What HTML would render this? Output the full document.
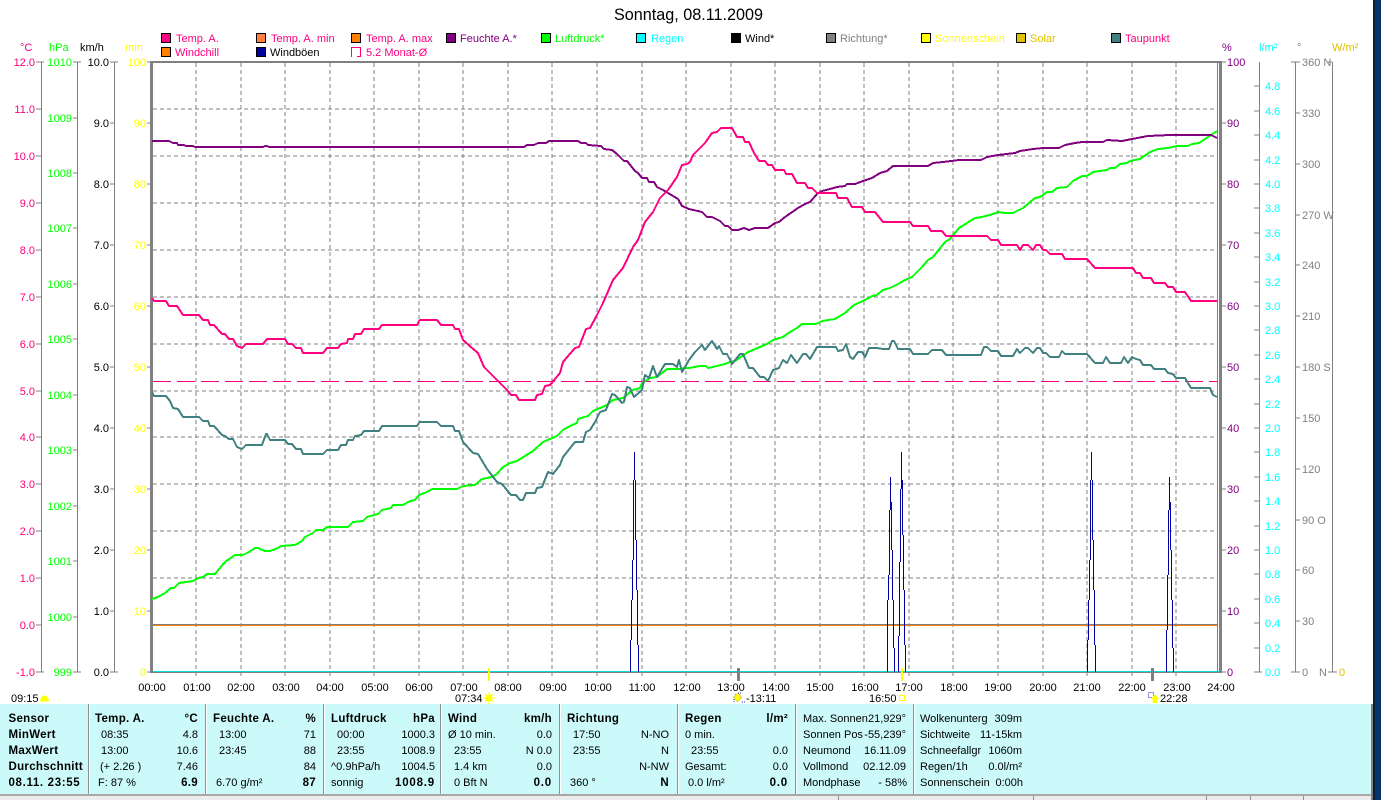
<!DOCTYPE html>
<html lang="de"><head><meta charset="utf-8"><title>Sonntag, 08.11.2009</title>
<style>
html,body{margin:0;padding:0;background:#fff;width:1381px;height:800px;overflow:hidden}
svg{display:block;position:absolute;left:0;top:0}
text{font-family:"Liberation Sans",sans-serif;font-size:11px}
.b text{font-weight:bold;font-size:11.5px;letter-spacing:.3px}
.e{text-anchor:end}
.m{text-anchor:middle}
.cr{shape-rendering:crispEdges}
</style></head><body>
<svg width="1381" height="800" viewBox="0 0 1381 800">
<!-- chrome -->
<rect x="1373" y="0" width="8" height="800" fill="#03356b"/>
<rect x="1373" y="0" width="2" height="800" fill="#0b1d33"/>
<!-- title -->
<text x="688.5" y="20" class="m" style="font-size:16.2px" fill="#000">Sonntag, 08.11.2009</text>
<!-- legend -->
<g class="cr" stroke="#000" stroke-width="1">
<rect x="161.5" y="33.5" width="9" height="9" fill="#ff0080"/><rect x="256.5" y="33.5" width="9" height="9" fill="#ff8040"/><rect x="351.5" y="33.5" width="9" height="9" fill="#ff8000"/><rect x="446.5" y="33.5" width="9" height="9" fill="#800080"/><rect x="541.5" y="33.5" width="9" height="9" fill="#00ff00"/><rect x="636.5" y="33.5" width="9" height="9" fill="#00ffff"/><rect x="731.5" y="33.5" width="9" height="9" fill="#000"/><rect x="826.5" y="33.5" width="9" height="9" fill="#808080"/><rect x="921.5" y="33.5" width="9" height="9" fill="#ffff00"/><rect x="1016.5" y="33.5" width="9" height="9" fill="#e0c000"/><rect x="1111.5" y="33.5" width="9" height="9" fill="#408080"/>
<rect x="161.5" y="47.5" width="9" height="9" fill="#ff8000"/><rect x="256.5" y="47.5" width="9" height="9" fill="#0000a0"/>
</g>
<path class="cr" d="M351.5 57V47.5H360.5V56.5H357" fill="none" stroke="#ff0080"/>
<g>
<text x="176" y="42" fill="#ff0080">Temp. A.</text><text x="271" y="42" fill="#ff0080">Temp. A. min</text><text x="366" y="42" fill="#ff0080">Temp. A. max</text><text x="460" y="42" fill="#800080">Feuchte A.*</text><text x="555" y="42" fill="#00ff00">Luftdruck*</text><text x="651" y="42" fill="#00ffff">Regen</text><text x="745" y="42" fill="#000">Wind*</text><text x="840" y="42" fill="#808080">Richtung*</text><text x="935" y="42" fill="#ffff00">Sonnenschein</text><text x="1030" y="42" fill="#e0c000">Solar</text><text x="1125" y="42" fill="#ff0080">Taupunkt</text>
<text x="175" y="56" fill="#ff0080">Windchill</text><text x="270" y="56" fill="#000">Windböen</text><text x="366" y="56" fill="#ff0080">5.2 Monat-Ø</text>
</g>
<!-- unit labels -->
<text x="20" y="51" fill="#ff0080">°C</text><text x="49" y="51" fill="#00ff00">hPa</text><text x="80" y="51" fill="#000">km/h</text><text x="125" y="51" fill="#ffff00">min</text>
<text x="1222" y="51" fill="#800080">%</text><text x="1259" y="51" fill="#00ffff">l/m²</text><text x="1297" y="51" fill="#808080">°</text><text x="1332" y="51" fill="#e0c000">W/m²</text>
<!-- left axes -->
<g class="cr" stroke="#808080" fill="none">
<path d="M41.5 62V672M36 62H44M36 109H41M36 156H41M36 203H41M36 250H41M36 297H41M36 344H41M36 391H41M36 437H41M36 484H41M36 531H41M36 578H41M36 625H41M36 672H44"/>
<path d="M77.5 62V672M73 62H81M73 118H77M73 173H77M73 228H77M73 284H77M73 339H77M73 395H77M73 450H77M73 506H77M73 561H77M73 617H77M73 672H81"/>
<path d="M114.5 62V672M110 62H118M110 123H114M110 184H114M110 245H114M110 306H114M110 367H114M110 428H114M110 489H114M110 550H114M110 611H114M110 672H118"/>
<path d="M147 62H151M147 123H151M147 184H151M147 245H151M147 306H151M147 367H151M147 428H151M147 489H151M147 550H151M147 611H151M147 672H151"/>
<!-- right axes -->
<path d="M1222 62H1226M1222 123H1226M1222 184H1226M1222 245H1226M1222 306H1226M1222 367H1226M1222 428H1226M1222 489H1226M1222 550H1226M1222 611H1226M1222 672H1226"/>
<path d="M1259.5 62V672M1254 86H1259M1254 111H1259M1254 135H1259M1254 160H1259M1254 184H1259M1254 208H1259M1254 233H1259M1254 257H1259M1254 282H1259M1254 306H1259M1254 330H1259M1254 355H1259M1254 379H1259M1254 404H1259M1254 428H1259M1254 452H1259M1254 477H1259M1254 501H1259M1254 526H1259M1254 550H1259M1254 574H1259M1254 599H1259M1254 623H1259M1254 648H1259M1254 672H1262"/>
<path d="M1295.5 62V672M1291 62H1300M1296 113H1300M1296 164H1300M1296 215H1300M1296 265H1300M1296 316H1300M1296 367H1300M1296 418H1300M1296 469H1300M1296 520H1300M1296 570H1300M1296 621H1300M1291 672H1300"/>
<path d="M1332.5 62V672M1328 62H1332M1328 672H1337"/>
</g>
<g class="e" fill="#ff0080"><text x="35" y="66">12.0</text><text x="35" y="113">11.0</text><text x="35" y="160">10.0</text><text x="35" y="207">9.0</text><text x="35" y="254">8.0</text><text x="35" y="301">7.0</text><text x="35" y="348">6.0</text><text x="35" y="395">5.0</text><text x="35" y="441">4.0</text><text x="35" y="488">3.0</text><text x="35" y="535">2.0</text><text x="35" y="582">1.0</text><text x="35" y="629">0.0</text><text x="35" y="676">-1.0</text></g>
<g class="e" fill="#00ff00"><text x="72" y="66">1010</text><text x="72" y="122">1009</text><text x="72" y="177">1008</text><text x="72" y="232">1007</text><text x="72" y="288">1006</text><text x="72" y="343">1005</text><text x="72" y="399">1004</text><text x="72" y="454">1003</text><text x="72" y="510">1002</text><text x="72" y="565">1001</text><text x="72" y="621">1000</text><text x="72" y="676">999</text></g>
<g class="e" fill="#000"><text x="109" y="66">10.0</text><text x="109" y="127">9.0</text><text x="109" y="188">8.0</text><text x="109" y="249">7.0</text><text x="109" y="310">6.0</text><text x="109" y="371">5.0</text><text x="109" y="432">4.0</text><text x="109" y="493">3.0</text><text x="109" y="554">2.0</text><text x="109" y="615">1.0</text><text x="109" y="676">0.0</text></g>
<g class="e" fill="#ffff00"><text x="146" y="66">100</text><text x="146" y="127">90</text><text x="146" y="188">80</text><text x="146" y="249">70</text><text x="146" y="310">60</text><text x="146" y="371">50</text><text x="146" y="432">40</text><text x="146" y="493">30</text><text x="146" y="554">20</text><text x="146" y="615">10</text><text x="146" y="676">0</text></g>
<g fill="#800080"><text x="1227" y="66">100</text><text x="1227" y="127">90</text><text x="1227" y="188">80</text><text x="1227" y="249">70</text><text x="1227" y="310">60</text><text x="1227" y="371">50</text><text x="1227" y="432">40</text><text x="1227" y="493">30</text><text x="1227" y="554">20</text><text x="1227" y="615">10</text><text x="1227" y="676">0</text></g>
<g fill="#00ffff"><text x="1265" y="90">4.8</text><text x="1265" y="115">4.6</text><text x="1265" y="139">4.4</text><text x="1265" y="164">4.2</text><text x="1265" y="188">4.0</text><text x="1265" y="212">3.8</text><text x="1265" y="237">3.6</text><text x="1265" y="261">3.4</text><text x="1265" y="286">3.2</text><text x="1265" y="310">3.0</text><text x="1265" y="334">2.8</text><text x="1265" y="359">2.6</text><text x="1265" y="383">2.4</text><text x="1265" y="408">2.2</text><text x="1265" y="432">2.0</text><text x="1265" y="456">1.8</text><text x="1265" y="481">1.6</text><text x="1265" y="505">1.4</text><text x="1265" y="530">1.2</text><text x="1265" y="554">1.0</text><text x="1265" y="578">0.8</text><text x="1265" y="603">0.6</text><text x="1265" y="627">0.4</text><text x="1265" y="652">0.2</text><text x="1265" y="676">0.0</text></g>
<g fill="#808080"><text x="1302" y="66">360 N</text><text x="1302" y="117">330</text><text x="1302" y="168">300</text><text x="1302" y="219">270 W</text><text x="1302" y="269">240</text><text x="1302" y="320">210</text><text x="1302" y="371">180 S</text><text x="1302" y="422">150</text><text x="1302" y="473">120</text><text x="1302" y="524">90  O</text><text x="1302" y="574">60</text><text x="1302" y="625">30</text><text x="1302" y="676">0</text><text x="1319" y="676">N</text></g>
<text x="1339" y="676" fill="#e0c000">0</text>
<!-- grid -->
<g class="cr" stroke="#808080" stroke-dasharray="4 3" fill="none">
<path d="M196 63V677M241 63V677M285 63V677M330 63V677M374 63V677M419 63V677M463 63V677M508 63V677M552 63V677M597 63V677M642 63V677M686 63V677M731 63V677M775 63V677M820 63V677M864 63V677M909 63V677M953 63V677M998 63V677M1043 63V677M1087 63V677M1132 63V677M1176 63V677"/>
<path d="M153 109H1218M153 156H1218M153 203H1218M153 250H1218M153 297H1218M153 344H1218M153 391H1218M153 437H1218M153 484H1218M153 531H1218M153 578H1218"/>
</g>
<g class="cr" fill="none">
<path d="M153 625.5H1218" stroke="#ff8000"/><path d="M153 624.5H1218" stroke="#808080"/>
<path d="M153 381.5H1218" stroke="#ff0080" stroke-dasharray="18 6"/>
<path d="M152 672.5H1219" stroke="#808080"/><path d="M152 671.5H1219" stroke="#00e0e0"/>
</g>
<!-- frame -->
<g class="cr" fill="#808080"><rect x="150" y="61" width="3" height="612"/><rect x="150" y="61" width="1072" height="2"/><rect x="1219" y="61" width="3" height="612"/><rect x="1217" y="63" width="1" height="609"/></g>
<!-- wind spikes -->
<g class="cr" fill="none" stroke="#0000a0">
<path d="M634.5 452V480M633.5 480V560M632.5 560V600M631.5 600V640M630.5 640V672M635.5 480V540M636.5 540V590M637.5 590V645M638.5 645V672"/>
<path d="M890.5 477V510M889.5 510V575M888.5 575V600M887.5 640V600M887.5 640V672M891.5 502V550M892.5 550V600M893.5 600V648M894.5 648V672"/>
<path d="M901.5 452V489M900.5 489V562M899.5 562V636M898.5 636V672M902.5 480V535M903.5 535V590M904.5 590V645M905.5 645V672"/>
<path d="M1091.5 452V480M1090.5 480V560M1089.5 560V600M1088.5 600V640M1087.5 640V672M1092.5 480V540M1093.5 540V590M1094.5 590V645M1095.5 645V672"/>
<path d="M1169.5 477V510M1168.5 510V575M1167.5 575V630M1166.5 630V672M1170.5 502V550M1171.5 550V600M1172.5 600V648M1173.5 648V672"/>
</g>
<!-- curves -->
<g fill="none" stroke-width="2" stroke-linejoin="round" class="cr">
<polyline stroke="#00ff00" points="152,599 158,597 165,593 171,588 174,588 179,583 193,581 198,578 203,577 207,574 215,574 225,562 235,555 243,555 249,552 255,548 258,548 265,551 270,551 278,548 281,546 295,545 302,541 305,537 313,533 316,530 323,530 327,527 348,527 353,522 363,521 367,517 378,514 382,510 391,508 393,505 403,505 410,501 415,500 419,495 427,492 432,489 457,489 463,486 475,485 482,479 492,477 497,474 503,467 510,463 517,461 533,451 543,442 557,436 563,430 570,426 577,423 578,419 588,416 593,411 607,405 613,400 623,398 633,390 640,388 642,383 650,378 657,377 667,369 677,369 689,368 700,366 706,366 708,368 713,367 721,365 725,364 730,362 735,361 748,352 753,350 767,344 773,340 783,337 790,332 797,328 802,324 816,324 822,321 835,319 845,313 854,305 865,300 872,296 877,295 883,290 890,288 900,283 905,280 912,277 922,267 928,260 933,257 945,242 950,239 959,228 967,223 975,218 982,217 993,214 998,212 1005,213 1013,213 1023,208 1035,198 1040,197 1047,192 1052,192 1057,188 1067,187 1073,181 1082,176 1087,176 1093,172 1107,170 1110,168 1115,168 1120,164 1127,163 1130,161 1140,159 1150,152 1158,149 1168,148 1177,146 1188,146 1192,144 1199,143 1208,137 1217,131"/>
<polyline stroke="#408080" points="152,392 154,396 166,396 170,401 173,408 178,409 183,417 199,417 203,421 208,421 210,426 214,426 222,435 225,436 229,439 233,439 237,447 242,449 246,445 262,445 266,434 267,434 270,440 285,440 288,444 292,444 296,449 301,449 303,454 323,454 327,450 338,450 341,445 346,445 348,440 353,440 355,436 361,435 364,431 379,431 382,426 417,426 419,423 420,422 437,422 441,426 453,426 455,431 459,431 463,442 473,453 478,454 487,469 497,482 502,484 511,495 516,495 520,500 523,500 526,493 535,493 537,488 542,487 548,472 553,474 560,465 563,457 575,442 583,442 586,432 590,430 595,422 600,412 606,410 612,394 615,395 622,403 624,402 627,387 630,388 634,397 642,390 645,375 649,378 653,366 657,377 665,364 673,364 677,367 679,360 682,372 689,360 695,352 702,345 705,350 712,341 717,349 719,346 723,354 727,354 732,364 740,354 743,354 749,368 753,368 760,377 764,377 768,381 773,370 779,368 783,360 787,363 791,355 797,363 803,354 806,354 810,359 817,347 836,347 838,351 843,350 846,344 850,357 853,359 858,352 862,352 865,357 869,348 877,348 883,349 889,349 892,341 894,341 898,349 910,349 913,354 928,354 932,350 942,350 946,355 981,355 984,347 987,347 991,351 998,351 1001,356 1013,356 1017,349 1020,353 1025,348 1028,348 1033,353 1037,348 1040,348 1043,353 1046,353 1050,357 1059,357 1062,351 1065,354 1087,354 1095,363 1103,363 1106,357 1110,363 1121,363 1124,357 1128,363 1132,357 1136,359 1140,360 1143,365 1151,365 1154,369 1165,369 1168,373 1173,374 1176,378 1185,378 1191,388 1210,388 1213,395 1217,397"/>
<polyline stroke="#800080" points="152,141 169,141 173,143 177,143 178,145 184,145 186,146 193,146 195,147 263,147 265,146 267,146 269,147 524,147 527,145 534,145 538,143 546,143 549,141 578,141 581,143 586,143 588,145 601,146 604,149 612,150 617,154 624,161 627,161 635,171 638,173 642,178 647,178 649,182 654,182 657,187 663,190 668,193 678,199 682,206 689,209 702,212 707,217 712,217 720,221 725,226 728,226 732,230 738,230 744,228 749,230 755,228 768,228 775,223 779,222 785,217 798,208 805,204 810,202 817,194 822,191 830,189 837,187 845,186 847,184 855,184 863,181 872,178 880,173 887,171 893,166 928,166 933,163 943,162 959,160 981,160 987,157 998,155 1015,153 1020,151 1033,149 1043,148 1059,148 1065,145 1075,143 1082,142 1103,142 1107,140 1122,141 1132,139 1148,136 1170,135 1211,135 1217,138"/>
<polyline stroke="#ff0080" points="152,298 154,301 166,301 169,306 177,306 183,315 199,315 203,320 208,320 210,325 214,325 222,334 225,334 229,339 233,339 237,346 242,348 246,344 263,344 267,339 285,339 288,344 292,344 296,348 301,348 303,353 323,353 327,348 338,348 341,344 347,343 348,339 353,339 355,334 361,334 364,329 379,329 382,325 417,325 419,321 420,320 437,320 441,325 453,325 455,329 459,329 463,340 472,348 478,353 484,367 497,380 508,391 511,395 516,395 519,400 535,400 537,395 542,394 545,386 550,385 560,373 563,362 575,348 579,347 586,329 590,328 597,315 603,303 613,280 623,268 633,247 638,240 645,222 653,212 660,198 668,190 677,177 682,165 687,164 690,162 693,155 705,143 712,133 717,132 721,128 732,128 737,137 743,137 745,142 749,142 754,153 759,161 765,161 768,165 772,165 775,170 784,170 786,174 792,174 797,183 805,183 808,188 812,188 817,193 836,193 838,198 847,198 852,207 862,207 865,212 875,212 883,222 910,222 913,226 928,226 931,231 942,231 946,236 987,236 991,240 998,240 1001,245 1017,245 1020,250 1023,245 1028,245 1033,250 1036,245 1040,245 1043,250 1046,250 1050,254 1062,254 1065,259 1087,259 1095,268 1133,268 1136,273 1140,273 1143,278 1151,278 1154,283 1165,283 1168,287 1173,287 1176,292 1185,292 1191,301 1217,301"/>
</g>
<!-- x labels -->
<g class="m" fill="#000"><text x="152" y="691">00:00</text><text x="197" y="691">01:00</text><text x="241" y="691">02:00</text><text x="286" y="691">03:00</text><text x="330" y="691">04:00</text><text x="375" y="691">05:00</text><text x="419" y="691">06:00</text><text x="464" y="691">07:00</text><text x="508" y="691">08:00</text><text x="553" y="691">09:00</text><text x="598" y="691">10:00</text><text x="642" y="691">11:00</text><text x="687" y="691">12:00</text><text x="731" y="691">13:00</text><text x="776" y="691">14:00</text><text x="820" y="691">15:00</text><text x="865" y="691">16:00</text><text x="909" y="691">17:00</text><text x="954" y="691">18:00</text><text x="998" y="691">19:00</text><text x="1043" y="691">20:00</text><text x="1087" y="691">21:00</text><text x="1132" y="691">22:00</text><text x="1177" y="691">23:00</text><text x="1221" y="691">24:00</text></g>
<!-- sun / moon markers -->
<g class="cr"><rect x="488" y="668" width="2" height="13" fill="#ffff00"/><rect x="901" y="668" width="2" height="13" fill="#ffff00"/><rect x="737" y="668" width="3" height="13" fill="#808080"/><rect x="1151" y="668" width="3" height="13" fill="#808080"/></g>
<text x="11" y="702" fill="#000">09:15</text>
<path d="M40 701.500A4.500 6 0 0 1 49 701.500Z" fill="#ffff00"/>
<text x="455" y="702" fill="#000">07:34</text>
<circle cx="489" cy="698" r="3.5" fill="#ffff00"/><path d="M489 692V704M483 698H495M485 694L493 702M493 694L485 702" stroke="#ffff00"/>
<path d="M735 694H740V697H742L737.500 702L733 697H735Z" fill="#ffff00" stroke="#b0a000" stroke-width=".5"/>
<path d="M738 693H741M734 699V702M742 702H745" stroke="#3030c0" stroke-dasharray="1 1"/>
<text x="746" y="702" fill="#000">-13:11</text>
<text x="869" y="702" fill="#000">16:50</text>
<rect class="cr" x="899.500" y="695.500" width="5" height="5" fill="none" stroke="#ffff00"/>
<rect class="cr" x="1148.500" y="692.500" width="5" height="5" fill="none" stroke="#3030c0" stroke-dasharray="1 1"/>
<path d="M1155 694L1159 699H1157.500V703H1152.500V699H1151Z" fill="#ffff00"/>
<text x="1160" y="702" fill="#000">22:28</text>
<!-- panel -->
<rect x="0" y="704" width="1373" height="90" fill="#ccfafa"/>
<rect x="1371" y="704" width="2" height="96" fill="#808080"/>
<g class="cr">
<rect x="88" y="704" width="1" height="90" fill="#909090"/><rect x="89" y="704" width="1" height="90" fill="#fff"/>
<rect x="205" y="704" width="1" height="90" fill="#909090"/><rect x="206" y="704" width="1" height="90" fill="#fff"/>
<rect x="323" y="704" width="1" height="90" fill="#909090"/><rect x="324" y="704" width="1" height="90" fill="#fff"/>
<rect x="440" y="704" width="1" height="90" fill="#909090"/><rect x="441" y="704" width="1" height="90" fill="#fff"/>
<rect x="559" y="704" width="1" height="90" fill="#909090"/><rect x="560" y="704" width="1" height="90" fill="#fff"/>
<rect x="677" y="704" width="1" height="90" fill="#909090"/><rect x="678" y="704" width="1" height="90" fill="#fff"/>
<rect x="795" y="704" width="1" height="90" fill="#909090"/><rect x="796" y="704" width="1" height="90" fill="#fff"/>
<rect x="913" y="704" width="1" height="90" fill="#909090"/><rect x="914" y="704" width="1" height="90" fill="#fff"/>
<rect x="0" y="794" width="1371" height="2" fill="#a8a8a8"/>
<rect x="0" y="796" width="1371" height="4" fill="#ececec"/>
<rect x="838" y="796" width="1" height="4" fill="#909090"/><rect x="1033" y="796" width="1" height="4" fill="#909090"/><rect x="1206" y="796" width="1" height="4" fill="#909090"/><rect x="1250" y="796" width="1" height="4" fill="#909090"/><rect x="1303" y="796" width="1" height="4" fill="#909090"/>
</g>
<g fill="#000">
<g class="b"><text x="8.5" y="722">Sensor</text><text x="8.5" y="738">MinWert</text><text x="8.5" y="754">MaxWert</text><text x="8.5" y="770">Durchschnitt</text><text x="8.5" y="786" textLength="71.5">08.11. 23:55</text>
<text x="95" y="722">Temp. A.</text><text x="198" y="722" class="e">°C</text><text x="198" y="786" class="e">6.9</text>
<text x="213" y="722">Feuchte A.</text><text x="316" y="722" class="e">%</text><text x="316" y="786" class="e">87</text>
<text x="331" y="722">Luftdruck</text><text x="435" y="722" class="e">hPa</text><text x="435" y="786" class="e" style="letter-spacing:.8px">1008.9</text>
<text x="448" y="722">Wind</text><text x="552" y="722" class="e">km/h</text><text x="552" y="786" class="e" style="letter-spacing:.8px">0.0</text>
<text x="567" y="722">Richtung</text><text x="669" y="786" class="e">N</text>
<text x="685" y="722">Regen</text><text x="788" y="722" class="e">l/m²</text><text x="788" y="786" class="e" style="letter-spacing:.8px">0.0</text></g>
<text x="101" y="738">08:35</text><text x="198" y="738" class="e">4.8</text><text x="101" y="754">13:00</text><text x="198" y="754" class="e">10.6</text><text x="100" y="770">(+ 2.26 )</text><text x="198" y="770" class="e">7.46</text><text x="98" y="786">F: 87 %</text>
<text x="219" y="738">13:00</text><text x="316" y="738" class="e">71</text><text x="219" y="754">23:45</text><text x="316" y="754" class="e">88</text><text x="316" y="770" class="e">84</text><text x="216" y="786">6.70 g/m²</text>
<text x="337" y="738">00:00</text><text x="435" y="738" class="e">1000.3</text><text x="337" y="754">23:55</text><text x="435" y="754" class="e">1008.9</text><text x="331" y="770">^0.9hPa/h</text><text x="435" y="770" class="e">1004.5</text><text x="331" y="786">sonnig</text>
<text x="448" y="738">Ø 10 min.</text><text x="552" y="738" class="e">0.0</text><text x="454" y="754">23:55</text><text x="552" y="754" class="e">N 0.0</text><text x="454" y="770">1.4 km</text><text x="552" y="770" class="e">0.0</text><text x="454" y="786">0 Bft N</text>
<text x="573" y="738">17:50</text><text x="669" y="738" class="e">N-NO</text><text x="573" y="754">23:55</text><text x="669" y="754" class="e">N</text><text x="669" y="770" class="e">N-NW</text><text x="570" y="786">360 °</text>
<text x="685" y="738">0 min.</text><text x="691" y="754">23:55</text><text x="788" y="754" class="e">0.0</text><text x="685" y="770">Gesamt:</text><text x="788" y="770" class="e">0.0</text><text x="688" y="786">0.0 l/m²</text>
<text x="803" y="722">Max. Sonnen</text><text x="906" y="722" class="e">21,929°</text><text x="803" y="738">Sonnen Pos</text><text x="906" y="738" class="e">-55,239°</text><text x="803" y="754">Neumond</text><text x="906" y="754" class="e">16.11.09</text><text x="803" y="770">Vollmond</text><text x="906" y="770" class="e">02.12.09</text><text x="803" y="786">Mondphase</text><text x="907" y="786" class="e">- 58%</text>
<text x="920" y="722">Wolkenunterg</text><text x="1022" y="722" class="e">309m</text><text x="920" y="738">Sichtweite</text><text x="1022" y="738" class="e">11-15km</text><text x="920" y="754">Schneefallgr</text><text x="1022" y="754" class="e">1060m</text><text x="920" y="770">Regen/1h</text><text x="1022" y="770" class="e">0.0l/m²</text><text x="920" y="786">Sonnenschein</text><text x="1023" y="786" class="e">0:00h</text>
</g>
</svg>
</body></html>
